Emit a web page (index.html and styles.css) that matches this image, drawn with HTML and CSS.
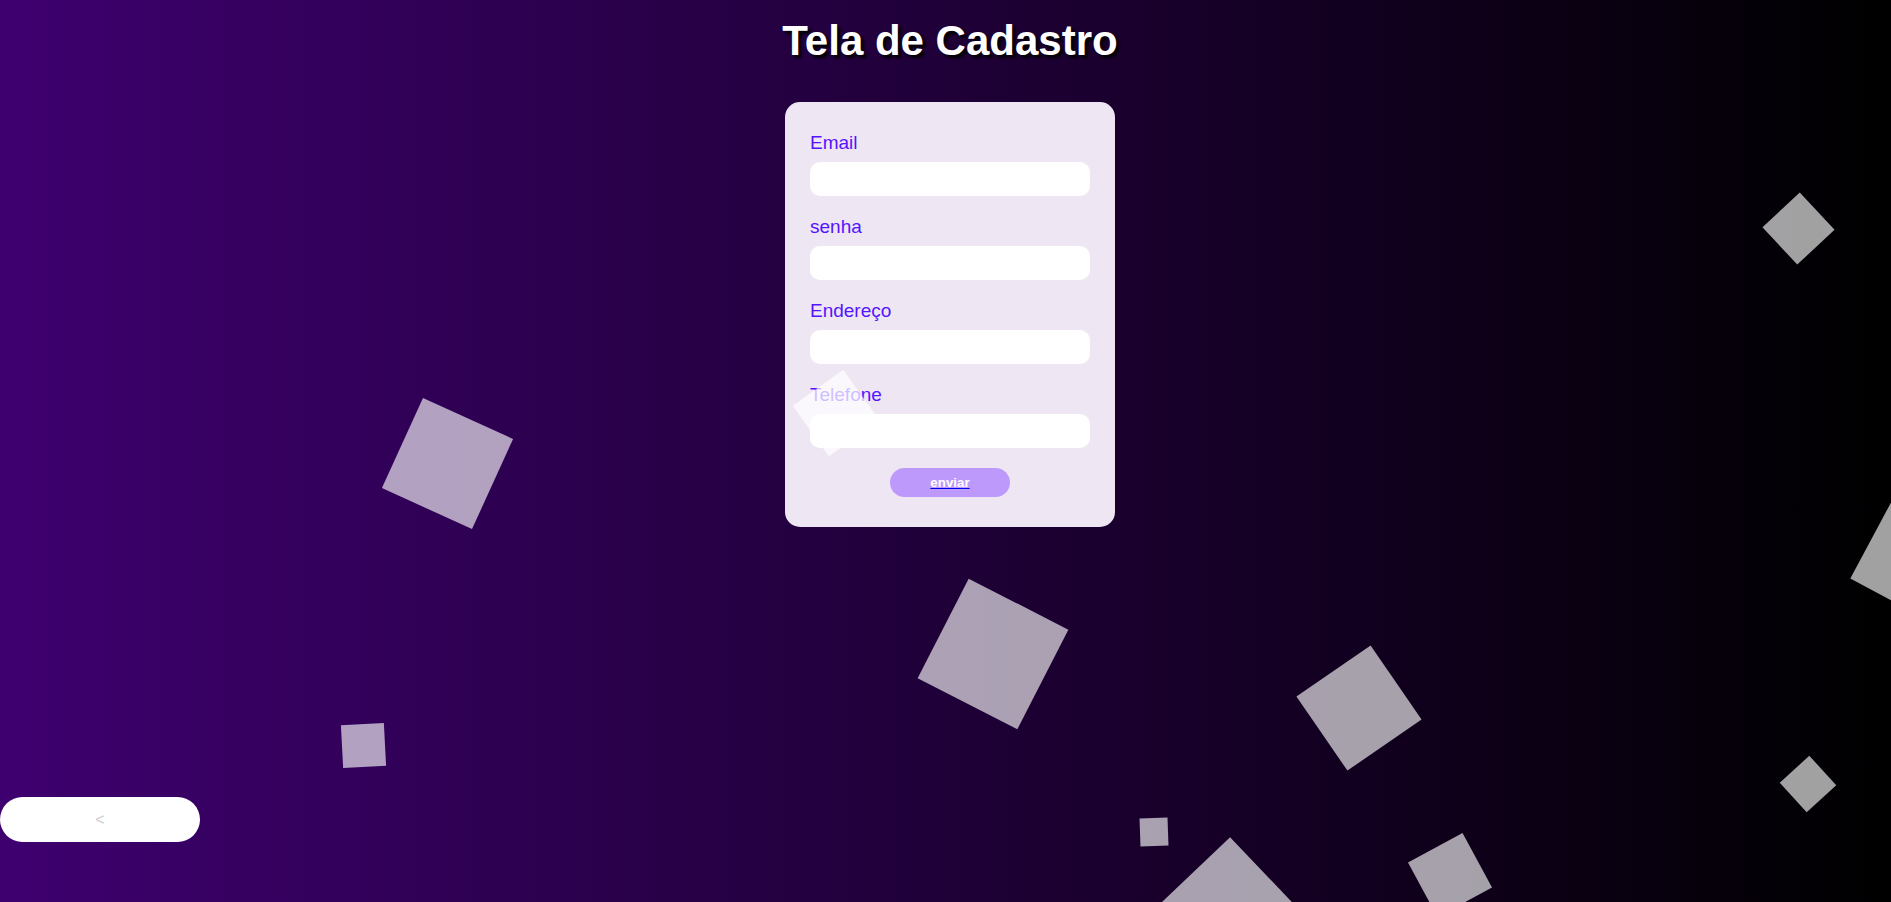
FILE: index.html
```html
<!DOCTYPE html>
<html lang="pt-BR">
<head>
<meta charset="utf-8">
<title>Tela de Cadastro</title>
<link rel="stylesheet" href="styles.css">
</head>
<body>
<main class="page">
  <h1 class="title">Tela de Cadastro</h1>
  <form class="card">
    <div class="field">
      <label class="label" for="email">Email</label>
      <input class="input" id="email" type="text">
    </div>
    <div class="field">
      <label class="label" for="senha">senha</label>
      <input class="input" id="senha" type="password">
    </div>
    <div class="field">
      <label class="label" for="endereco">Endereço</label>
      <input class="input" id="endereco" type="text">
    </div>
    <div class="field">
      <label class="label" for="telefone">Telefone</label>
      <input class="input" id="telefone" type="text">
    </div>
    <button class="submit" type="button"><span class="submit-text">enviar</span></button>
  </form>
</main>
<button class="back" type="button">&lt;</button>
<div class="squares" aria-hidden="true">
  <div class="sq s1"></div>
  <div class="sq s2"></div>
  <div class="sq s3"></div>
  <div class="sq s4"></div>
  <div class="sq s5"></div>
  <div class="sq s6"></div>
  <div class="sq s7"></div>
  <div class="sq s8"></div>
  <div class="sq s9"></div>
  <div class="sq s10"></div>
  <div class="sq s11"></div>
</div>
</body>
</html>
```
FILE: styles.css
```css
html, body {
  margin: 0;
  height: 100%;
}

body {
  background: linear-gradient(to right, #3e006f, #000000);
  font-family: "Liberation Sans", Arial, sans-serif;
  overflow: hidden;
  position: relative;
}

.page {
  display: flex;
  flex-direction: column;
  align-items: center;
  padding-left: 9px;
}

.title {
  margin: 18px 0 0;
  font-size: 42px;
  font-weight: bold;
  line-height: 46px;
  color: #ffffff;
  text-shadow: 3px 3px 3px #000000;
}

.card {
  margin-top: 38px;
  width: 330px;
  box-sizing: border-box;
  padding: 30px 25px;
  border-radius: 15px;
  background: #eee6f3;
  display: flex;
  flex-direction: column;
}

.field {
  display: flex;
  flex-direction: column;
  margin-bottom: 20px;
}

.label {
  font-size: 19px;
  line-height: 22px;
  color: #5514ff;
  margin-bottom: 8px;
}

.input {
  height: 34px;
  box-sizing: border-box;
  border: none;
  border-radius: 10px;
  background: #ffffff;
  padding: 0 10px;
  outline: none;
}

.submit {
  align-self: center;
  width: 120px;
  height: 29px;
  border: none;
  border-radius: 15px;
  background: #bd99fc;
  padding: 0;
  font-family: "Liberation Sans", Arial, sans-serif;
  font-size: 13.33px;
  font-weight: bold;
  color: #ffffff;
  cursor: pointer;
}

.submit-text {
  text-decoration: underline;
  text-decoration-color: #0000ee;
}

.back {
  position: fixed;
  left: 0;
  bottom: 60px;
  width: 200px;
  height: 45px;
  border: none;
  border-radius: 23px;
  background: #ffffff;
  color: #cccccc;
  font-family: "Liberation Sans", Arial, sans-serif;
  font-size: 16px;
  padding: 0;
}

.squares {
  position: absolute;
  inset: 0;
  overflow: hidden;
  pointer-events: none;
}

.sq {
  position: absolute;
  background: rgba(255, 255, 255, 0.63);
}

.s1 { left: 1772.5px; top: 202.5px; width: 51px; height: 51px; transform: rotate(47deg); }
.s2 { left: 1867.7px; top: 507.9px; width: 100px; height: 100px; transform: rotate(28.2deg); }
.s3 { left: 398.25px; top: 414.25px; width: 99px; height: 99px; transform: rotate(24.5deg); }
.s4 { left: 342px; top: 724px; width: 43px; height: 43px; transform: rotate(-3deg); }
.s5 { left: 937px; top: 598px; width: 112px; height: 112px; transform: rotate(27.1deg); }
.s6 { left: 1314px; top: 663px; width: 90px; height: 90px; transform: rotate(-34.5deg); }
.s7 { left: 1140px; top: 817.7px; width: 28px; height: 28px; transform: rotate(-2deg); }
.s8 { left: 1168px; top: 861.8px; width: 120px; height: 120px; transform: rotate(46.4deg); }
.s9 { left: 1418.5px; top: 844px; width: 62px; height: 62px; transform: rotate(61.6deg); }
.s10 { left: 1788px; top: 764px; width: 40px; height: 40px; transform: rotate(47.7deg); }
.s11 { left: 804.8px; top: 382.3px; width: 62px; height: 62px; transform: rotate(54.5deg); background: rgba(255, 255, 255, 0.72); }
```
